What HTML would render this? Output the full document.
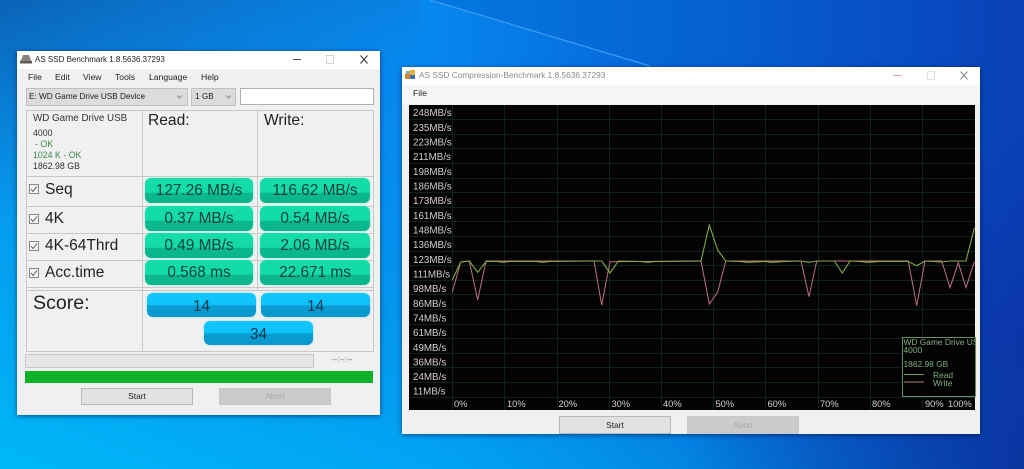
<!DOCTYPE html>
<html><head><meta charset="utf-8"><title>AS SSD</title>
<style>
html,body{margin:0;padding:0;width:1024px;height:469px;overflow:hidden}
body{position:relative;font-family:"Liberation Sans",sans-serif;color:#222;background:#0a6fd8}
#w{position:absolute;left:0;top:0;width:1024px;height:469px;filter:blur(.35px)}
.a{position:absolute;white-space:pre}
.win{position:absolute;background:#f0f0f0;box-shadow:0 1px 5px rgba(0,10,60,.55)}
.m{position:absolute;font-size:8.6px;line-height:10px;color:#222}
.line{position:absolute;background:#c8c8c8}
.g,.b{position:absolute;border-radius:6px;text-align:center;font-size:15.4px;color:#143f3a}
.g{height:25px;line-height:26px;background:linear-gradient(#14dcaa 0,#12dba6 58%,#0bb88e 60%,#0ab58c 100%);box-shadow:0 0 2px #8ff0d8}
.b{height:24px;line-height:27px;color:#0d3a50;background:linear-gradient(#10c6ff 0,#0fc2fb 50%,#0a9dd2 53%,#0a97cc 100%);box-shadow:0 0 2px #8fe0ff}
.lb{position:absolute;left:45px;font-size:15.5px;line-height:18px;color:#222}
.ck{position:absolute;left:29px;width:8px;height:8px;border:1px solid #888;background:#f6f6f6}
.btn{position:absolute;width:110px;height:15px;line-height:15px;border:1px solid #b8b8b8;background:#e2e2e2;text-align:center;font-size:8.4px;color:#222}
.btn.d{background:#cbcbcb;border-color:#c8c8c8;color:#a8a8a8}
</style></head><body><div id="w">
<svg class="a" style="left:0;top:0" width="1024" height="469" viewBox="0 0 1024 469">
<defs>
<linearGradient id="bg" x1="0" y1="0" x2="1" y2="0"><stop offset="0" stop-color="#0a8ce8"/><stop offset=".42" stop-color="#0788ee"/><stop offset=".68" stop-color="#0560d4"/><stop offset="1" stop-color="#0a40b8"/></linearGradient>
<linearGradient id="bl" x1="0" y1="1" x2=".55" y2=".35"><stop offset="0" stop-color="#00b8f8"/><stop offset="1" stop-color="#00a0f0" stop-opacity="0"/></linearGradient>
<linearGradient id="tl" x1="0" y1="0" x2=".4" y2=".6"><stop offset="0" stop-color="#0a62b8"/><stop offset="1" stop-color="#0a70c8" stop-opacity="0"/></linearGradient>
<linearGradient id="tr" gradientUnits="userSpaceOnUse" x1="430" y1="0" x2="1024" y2="0"><stop offset="0" stop-color="#0478e0"/><stop offset=".5" stop-color="#0560d0"/><stop offset="1" stop-color="#0a40b8"/></linearGradient>
<radialGradient id="br" gradientUnits="userSpaceOnUse" cx="1024" cy="469" r="340"><stop offset="0" stop-color="#0a2c98" stop-opacity=".8"/><stop offset="1" stop-color="#0a2c98" stop-opacity="0"/></radialGradient>
</defs>
<rect width="1024" height="469" fill="url(#bg)"/>
<rect width="1024" height="469" fill="url(#bl)"/>
<rect width="420" height="260" fill="url(#tl)"/>
<polygon points="430,0 1024,0 1024,140 650,66" fill="url(#tr)"/>
<path d="M430 0L650 66" stroke="#3d9ef2" stroke-width="1.2" fill="none"/>
<rect width="1024" height="469" fill="url(#br)"/>
</svg>

<!-- Main window -->
<div class="win" style="left:17px;top:51px;width:363px;height:364px"></div>
<div class="a" style="left:17px;top:51px;width:363px;height:18px;background:#fff"></div>
<svg class="a" style="left:20px;top:54px" width="13" height="10" viewBox="0 0 13 10"><path d="M3 1H9L12 9H0Z" fill="#8a8280"/><rect x="0" y="7" width="12" height="2.5" fill="#5f5a58"/></svg>
<div class="m" style="left:35px;top:55px;font-size:8px;color:#222">AS SSD Benchmark 1.8.5636.37293</div>
<svg class="a" style="left:285px;top:52px" width="90" height="16" viewBox="0 0 90 16" fill="none"><path d="M8 7.5H16" stroke="#555" stroke-width="1"/><rect x="41.5" y="3.5" width="7" height="8" stroke="#d4d4d4"/><path d="M75.500 3.500L82.500 11.500M82.500 3.500L75.500 11.500" stroke="#333" stroke-width="1"/></svg>
<div class="m" style="left:28px;top:72px">File</div>
<div class="m" style="left:55px;top:72px">Edit</div>
<div class="m" style="left:83px;top:72px">View</div>
<div class="m" style="left:115px;top:72px">Tools</div>
<div class="m" style="left:149px;top:72px">Language</div>
<div class="m" style="left:201px;top:72px">Help</div>

<div class="a" style="left:26px;top:88px;width:160px;height:16px;background:#dcdcdc;border:1px solid #c0c0c0"></div>
<div class="m" style="left:29px;top:92px;font-size:8.200px">E: WD Game Drive USB Device</div>
<div class="a" style="left:191px;top:88px;width:43px;height:16px;background:#dcdcdc;border:1px solid #c0c0c0"></div>
<div class="m" style="left:195px;top:92px;font-size:8.200px">1 GB</div>
<svg class="a" style="left:176px;top:94px" width="60" height="6" viewBox="0 0 60 6" fill="none" stroke="#888"><path d="M1 1.500L3.500 4L6 1.500"/><path d="M50 1.500L52.500 4L55 1.500"/></svg>
<div class="a" style="left:240px;top:88px;width:132px;height:15px;background:#fff;border:1px solid #b0b0b0"></div>

<!-- table grid -->
<div class="line" style="left:26px;top:110px;width:347px;height:1px"></div>
<div class="line" style="left:26px;top:176px;width:347px;height:1px"></div>
<div class="line" style="left:26px;top:206px;width:347px;height:1px"></div>
<div class="line" style="left:26px;top:233px;width:347px;height:1px"></div>
<div class="line" style="left:26px;top:260px;width:347px;height:1px"></div>
<div class="line" style="left:26px;top:287px;width:347px;height:1px"></div>
<div class="line" style="left:26px;top:290px;width:347px;height:1px"></div>
<div class="line" style="left:26px;top:351px;width:347px;height:1px"></div>
<div class="line" style="left:26px;top:110px;width:1px;height:242px"></div>
<div class="line" style="left:142px;top:110px;width:1px;height:242px"></div>
<div class="line" style="left:257px;top:110px;width:1px;height:180px"></div>
<div class="line" style="left:373px;top:110px;width:1px;height:242px"></div>

<div class="a" style="left:33px;top:113px;font-size:9.800px;line-height:12px;color:#333">WD Game Drive USB</div>
<div class="a" style="left:33px;top:128px;font-size:8.800px;line-height:11px;color:#333">4000</div>
<div class="a" style="left:35px;top:139px;font-size:8.800px;line-height:11px;color:#3a8a48">- OK</div>
<div class="a" style="left:33px;top:150px;font-size:8.800px;line-height:11px;color:#3a8a48">1024 K - OK</div>
<div class="a" style="left:33px;top:161px;font-size:8.800px;line-height:11px;color:#333">1862.98 GB</div>
<div class="a" style="left:148px;top:112px;font-size:15.600px;line-height:18px">Read:</div>
<div class="a" style="left:264px;top:112px;font-size:15.600px;line-height:18px">Write:</div>

<div class="ck" style="top:184px"></div><div class="lb" style="top:181px">Seq</div>
<div class="ck" style="top:214px"></div><div class="lb" style="top:210px">4K</div>
<div class="ck" style="top:241px"></div><div class="lb" style="top:237px">4K-64Thrd</div>
<div class="ck" style="top:268px"></div><div class="lb" style="top:264px">Acc.time</div>
<svg class="a" style="left:29px;top:184px" width="10" height="95" viewBox="0 0 10 95" fill="none" stroke="#555"><path d="M2 5L4 7.500L8 2.500"/><path d="M2 35L4 37.500L8 32.500"/><path d="M2 62L4 64.500L8 59.500"/><path d="M2 89L4 91.500L8 86.500"/></svg>

<div class="g" style="left:145px;top:178px;width:108px">127.26 MB/s</div>
<div class="g" style="left:260px;top:178px;width:110px">116.62 MB/s</div>
<div class="g" style="left:145px;top:206px;width:108px">0.37 MB/s</div>
<div class="g" style="left:260px;top:206px;width:110px">0.54 MB/s</div>
<div class="g" style="left:145px;top:233px;width:108px">0.49 MB/s</div>
<div class="g" style="left:260px;top:233px;width:110px">2.06 MB/s</div>
<div class="g" style="left:145px;top:260px;width:108px">0.568 ms</div>
<div class="g" style="left:260px;top:260px;width:110px">22.671 ms</div>

<div class="a" style="left:33px;top:292px;font-size:19.600px;line-height:23px">Score:</div>
<div class="b" style="left:147px;top:293px;width:109px">14</div>
<div class="b" style="left:261px;top:293px;width:109px">14</div>
<div class="b" style="left:204px;top:321px;width:109px">34</div>

<div class="a" style="left:25px;top:354px;width:287px;height:12px;background:#e6e6e6;border:1px solid #c8c8c8"></div>
<div class="a" style="left:332px;top:355px;font-size:8px;line-height:10px;color:#666">--:--:--</div>
<div class="a" style="left:25px;top:371px;width:348px;height:12px;background:#0cb028"></div>
<div class="btn" style="left:81px;top:388px">Start</div>
<div class="btn d" style="left:219px;top:388px">Abort</div>

<!-- Compression window -->
<div class="win" style="left:402px;top:67px;width:578px;height:367px;background:#f0f0f0"></div>
<div class="a" style="left:402px;top:67px;width:578px;height:18px;background:#fff"></div>
<div class="a" style="left:402px;top:85px;width:578px;height:19px;background:#f6f6f6"></div>
<svg class="a" style="left:405px;top:70px" width="11" height="10" viewBox="0 0 11 10"><rect x="0" y="4" width="5" height="5" fill="#d9822b"/><rect x="5" y="0" width="5" height="5" fill="#e8b030"/><rect x="5" y="5" width="5" height="4" fill="#3a6fc0"/><rect x="1" y="1" width="4" height="3" fill="#8aa"/></svg>
<div class="m" style="left:419px;top:70px;font-size:8.300px;color:#8a8a8a">AS SSD Compression-Benchmark 1.8.5636.37293</div>
<svg class="a" style="left:885px;top:68px" width="90" height="16" viewBox="0 0 90 16" fill="none"><path d="M8 7.500H16" stroke="#c8a0a8" stroke-width="1"/><rect x="42.500" y="3.500" width="7" height="8" stroke="#e2e2e2"/><path d="M75.500 3.500L82.500 11.500M82.500 3.500L75.500 11.500" stroke="#888" stroke-width="1"/></svg>
<div class="m" style="left:413px;top:88px">File</div>

<svg class="a" style="left:0;top:0" width="1024" height="469" viewBox="0 0 1024 469" font-family="Liberation Sans, sans-serif">
<rect x="409" y="105" width="566" height="305" fill="#030303"/>
<path d="M452.500 105V410M504.500 105V410M557.500 105V410M609.500 105V410M661.500 105V410M713.500 105V410M765.500 105V410M818.500 105V410M870.500 105V410M922.500 105V410" stroke="#0d2221" stroke-width="1" fill="none"/>
<path d="M409 119.500H975M409 134.500H975M409 148.500H975M409 163.500H975M409 178.500H975M409 192.500H975M409 207.500H975M409 221.500H975M409 236.500H975M409 251.500H975M409 265.500H975M409 280.500H975M409 294.500H975M409 309.500H975M409 324.500H975M409 338.500H975M409 353.500H975M409 367.500H975M409 382.500H975M409 397.500H975" stroke="#0d2221" stroke-width="1" fill="none"/>
<g fill="#cfcfcf" font-size="9.800">
<text x="413" y="116">248MB/s</text><text x="413" y="131">235MB/s</text><text x="413" y="145.500">223MB/s</text><text x="413" y="160">211MB/s</text><text x="413" y="175">198MB/s</text><text x="413" y="189.500">186MB/s</text><text x="413" y="204">173MB/s</text><text x="413" y="219">161MB/s</text><text x="413" y="233.500">148MB/s</text><text x="413" y="248">136MB/s</text><text x="413" y="263">123MB/s</text><text x="413" y="277.500">111MB/s</text><text x="413" y="292">98MB/s</text><text x="413" y="307">86MB/s</text><text x="413" y="321.500">74MB/s</text><text x="413" y="336">61MB/s</text><text x="413" y="351">49MB/s</text><text x="413" y="365.500">36MB/s</text><text x="413" y="380">24MB/s</text><text x="413" y="394.500">11MB/s</text>
</g>
<g fill="#cfcfcf" font-size="9.300">
<text x="454" y="407">0%</text><text x="507" y="407">10%</text><text x="558.500" y="407">20%</text><text x="611.500" y="407">30%</text><text x="663" y="407">40%</text><text x="715.500" y="407">50%</text><text x="767.500" y="407">60%</text><text x="820" y="407">70%</text><text x="872" y="407">80%</text><text x="925" y="407">90%</text><text x="948" y="407">100%</text>
</g>
<polyline fill="none" stroke="#c0707e" stroke-width="1" points="452.300,292.300 460.700,262 469.300,261 477.700,300 486,261 594,261 601.700,305 610,261.700 701,261 709.300,304 717.700,292 725.700,261 801,261 809,296.700 816.700,261 908.300,261 916.700,305.700 925,261 941.700,261 950,287.700 958.300,262.700 966,287.700 974.300,261.700"/>
<polyline fill="none" stroke="#86ab42" stroke-width="1.100" points="452.300,280 460.700,262 469.300,261 477.700,272.300 486,261.500 497,261.500 503,262.300 510,261.500 535,261.500 543,262.300 550,261.500 594,261 601.700,261 610,273 618.300,261 640,261.500 648,262.300 655,261.500 701,261 709.300,225 717.700,250 725.700,261 740,261.500 748,262.300 765,261.500 772,262.300 785,261.500 801,261 809,262.300 816.700,261 834.300,261 842.300,273 850,261 860,261.500 868,262.300 880,261.500 908.300,261.500 916.700,265.700 925,261 941.700,262 950,261 966,261 974.300,228"/>
<rect x="902.500" y="337.500" width="73" height="59" fill="#030303" stroke="#66906a"/>
<svg x="903" y="338" width="72" height="58" viewBox="903 338 72 58">
<g fill="#7fb07f" font-size="8.400">
<text x="903.500" y="345">WD Game Drive USB</text>
<text x="903.500" y="353">4000</text>
<text x="903.500" y="367">1862.98 GB</text>
<text x="933" y="378">Read</text>
<text x="933" y="386">Write</text>
</g></svg>
<path d="M904 374.500H924" stroke="#7f9f5a"/><path d="M904 382H924" stroke="#b08078"/>
</svg>

<div class="btn" style="left:559px;top:416px;height:16px;line-height:16px">Start</div>
<div class="btn d" style="left:687px;top:416px;height:16px;line-height:16px">Abort</div>
</div></body></html>
